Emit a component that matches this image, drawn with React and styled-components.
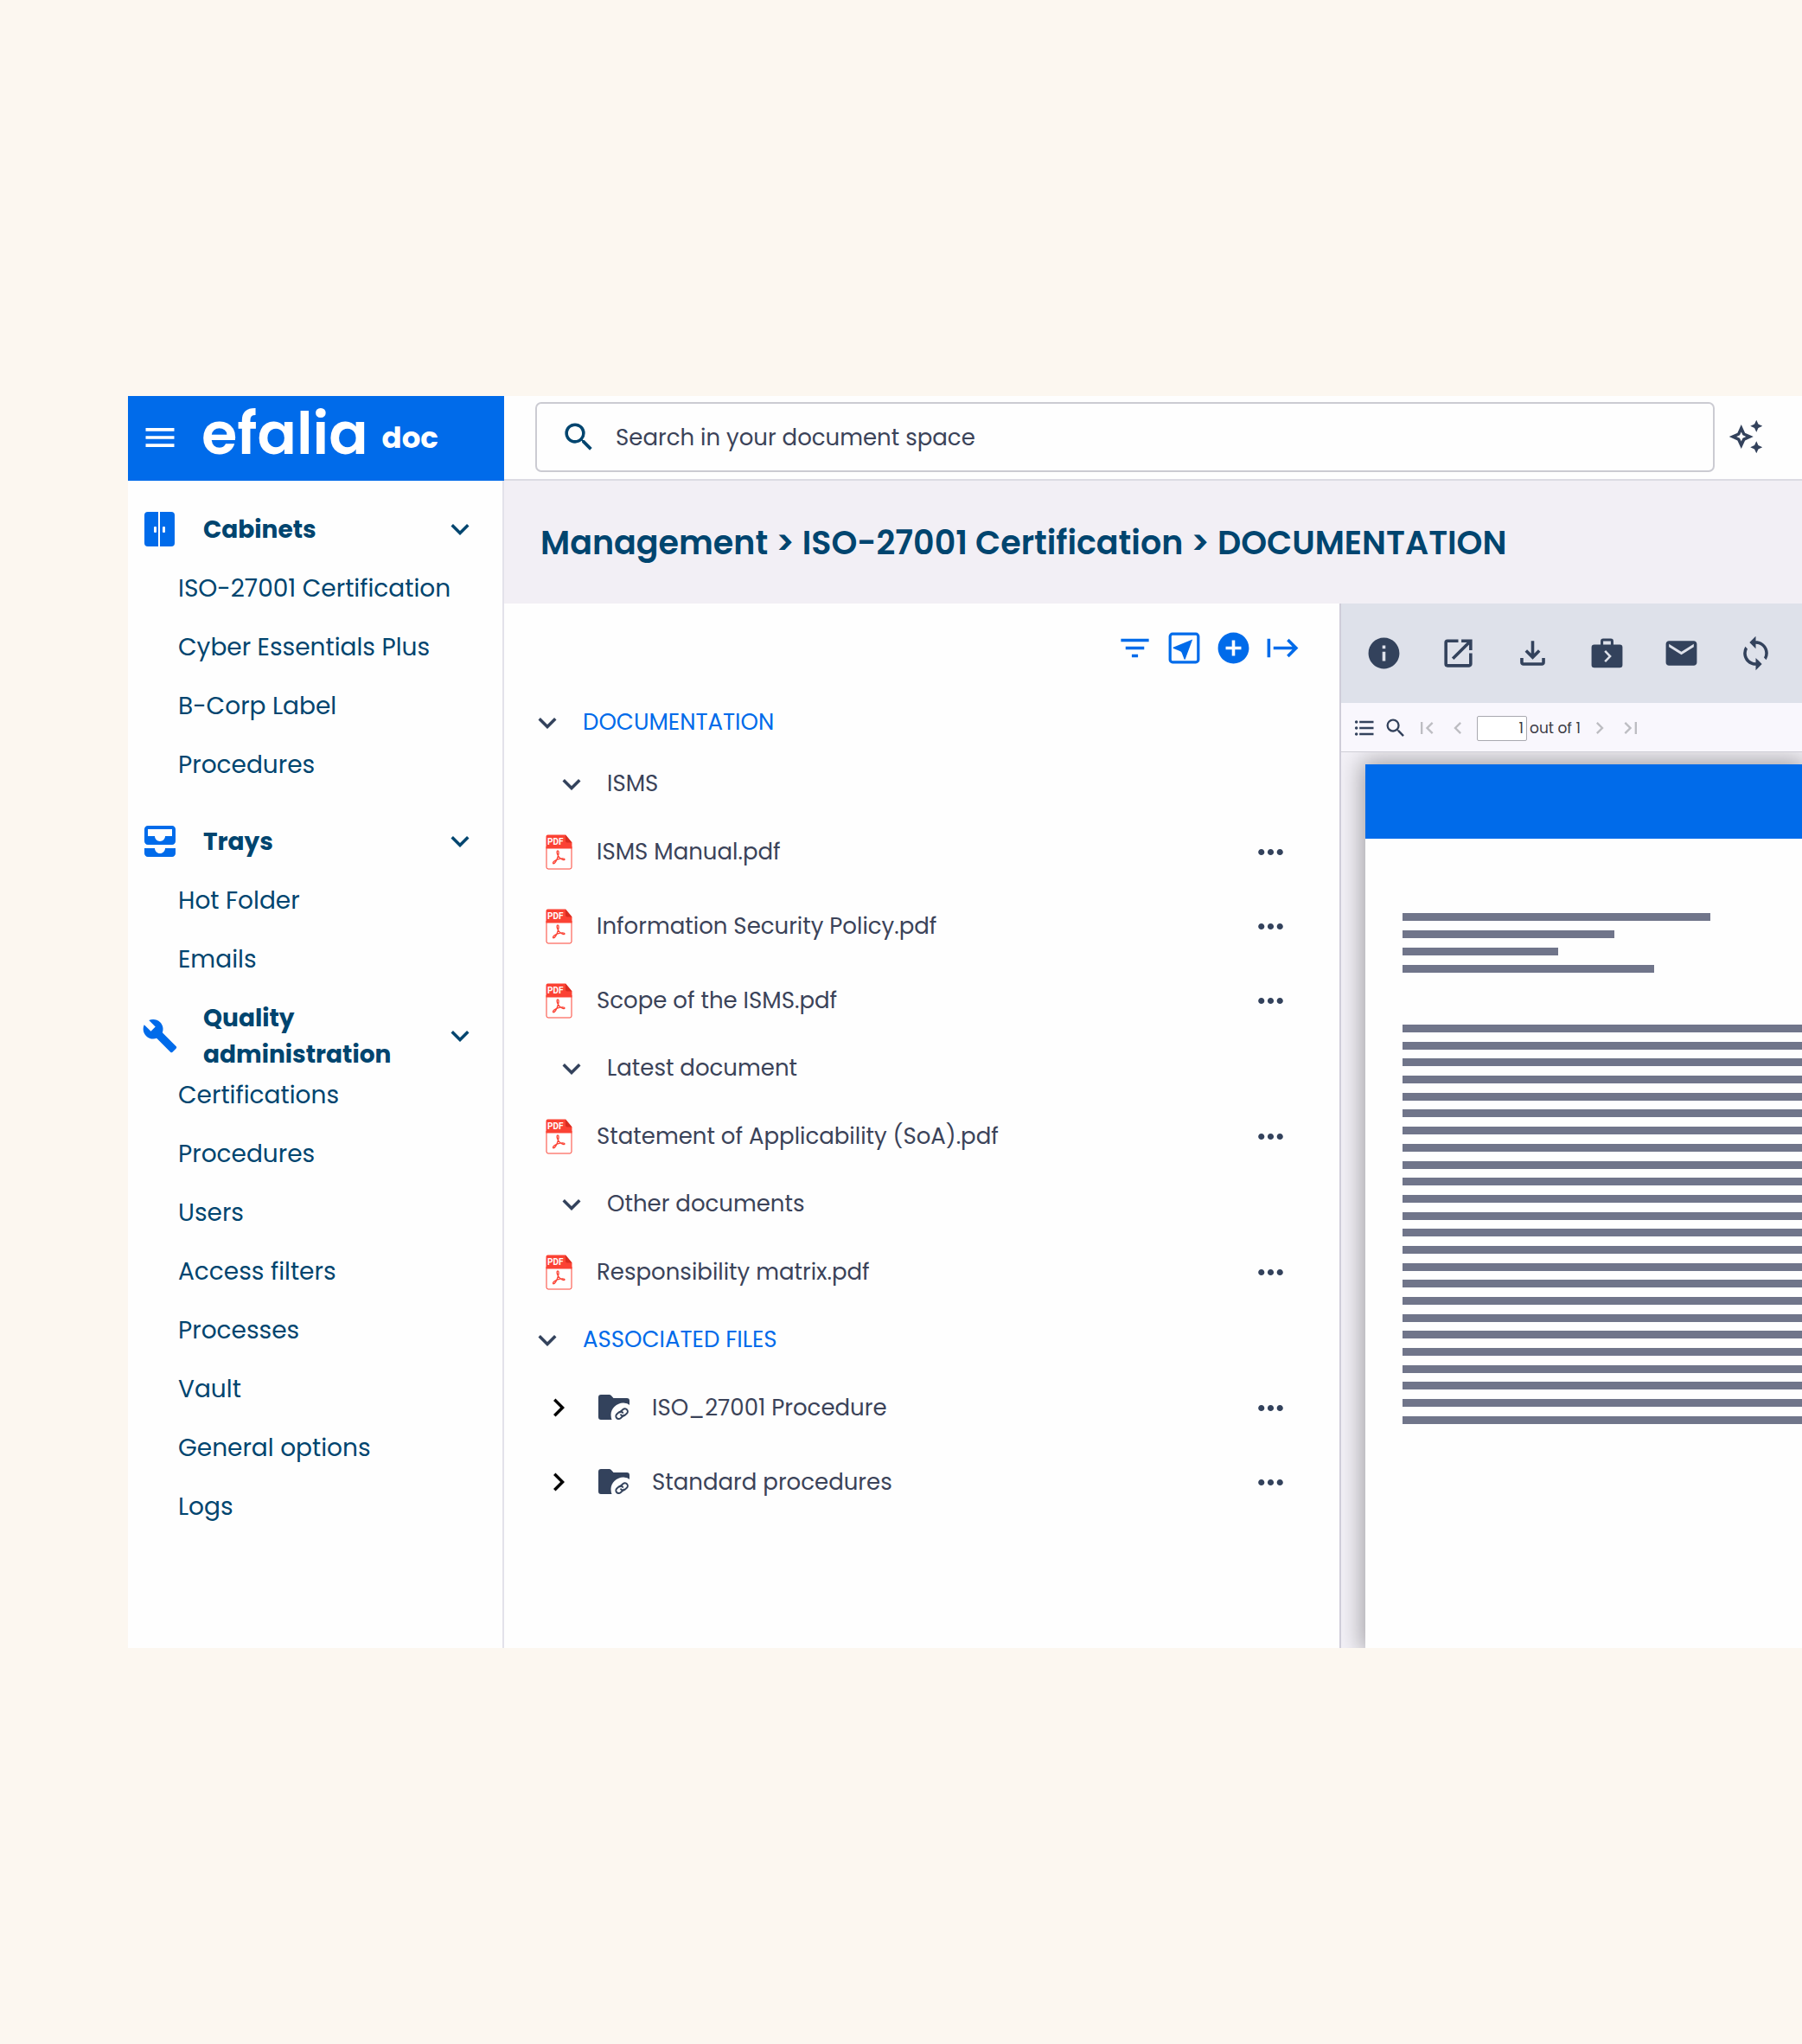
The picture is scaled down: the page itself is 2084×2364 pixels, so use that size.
import React from 'react';
import styled, { createGlobalStyle } from 'styled-components';
import {
    MdMenu, MdSearch, MdOutlineAutoAwesome, MdAllInbox, MdBuild, MdExpandMore,
    MdFilterList, MdAddCircle, MdStart, MdMoreHoriz, MdChevronRight, MdChevronLeft,
    MdInfo, MdOpenInNew, MdOutlineFileDownload, MdEmail, MdSync,
    MdFormatListBulleted, MdFirstPage, MdLastPage
} from 'react-icons/md';

const sections = [
    {
        title: 'Cabinets',
        icon: 'cabinet',
        items: ['ISO-27001 Certification', 'Cyber Essentials Plus', 'B-Corp Label', 'Procedures']
    },
    {
        title: 'Trays',
        icon: 'trays',
        items: ['Hot Folder', 'Emails']
    },
    {
        title: 'Quality administration',
        icon: 'quality',
        items: ['Certifications', 'Procedures', 'Users', 'Access filters', 'Processes', 'Vault', 'General options', 'Logs']
    }
];

const rows = [
    { type: 'root', label: 'DOCUMENTATION' },
    { type: 'group', label: 'ISMS' },
    { type: 'file', label: 'ISMS Manual.pdf' },
    { type: 'file', label: 'Information Security Policy.pdf' },
    { type: 'file', label: 'Scope of the ISMS.pdf' },
    { type: 'group', label: 'Latest document' },
    { type: 'file', label: 'Statement of Applicability (SoA).pdf' },
    { type: 'group', label: 'Other documents' },
    { type: 'file', label: 'Responsibility matrix.pdf' },
    { type: 'root', label: 'ASSOCIATED FILES' },
    { type: 'folder', label: 'ISO_27001 Procedure' },
    { type: 'folder', label: 'Standard procedures' }
];

const introLines = [356, 245, 180, 291];

function CabinetIcon() {
    return (
        <svg width="36" height="40" viewBox="0 0 36 40" fill="#006bea">
            <path d="M4 0h12v40H4a4 4 0 0 1-4-4V4a4 4 0 0 1 4-4z" />
            <path d="M18 0h13a4 4 0 0 1 4 4v32a4 4 0 0 1-4 4H18z" />
            <rect x="11" y="17" width="3" height="7" rx="1" fill="#fff" />
            <rect x="21" y="17" width="3" height="7" rx="1" fill="#fff" />
        </svg>
    );
}

function SendBoxIcon() {
    return (
        <svg width="43" height="43" viewBox="0 0 24 24" fill="currentColor">
            <rect x="2.9" y="2.9" width="18.2" height="18.2" rx="1.6" fill="none" stroke="currentColor" strokeWidth="1.8" />
            <path d="M17.4 6.4 4.8 11.6v.5l4.4 1.9c.7.3 1 .6 1.3 1.2l1.6 4.2h.5z" />
        </svg>
    );
}

function BriefcaseIcon() {
    return (
        <svg width="43" height="43" viewBox="0 0 24 24" fill="none">
            <path d="M8.7 7V4.2c0-.5.4-.8.8-.8h5c.5 0 .8.3.8.8V7" stroke="#33425c" strokeWidth="1.7" />
            <rect x="2" y="6.4" width="20" height="15" rx="1.8" fill="#33425c" />
            <path d="m10.7 10.6 3.3 3.4-3.3 3.4" stroke="#dee1ea" strokeWidth="1.4" />
        </svg>
    );
}

function PdfIcon() {
    return (
        <svg width="31" height="41" viewBox="0 0 31 41">
            <path d="M1 14v24a2 2 0 0 0 2 2h25a2 2 0 0 0 2-2V14" fill="#fff" stroke="#fb4234" strokeWidth="1" />
            <path d="M2.500 0.500H23L30.500 9.500V16.500H.5V2.500a2 2 0 0 1 2-2z" fill="#fb4234" />
            <path d="M23 .5 30.500 9.500H25a2 2 0 0 1-2-2z" fill="#d92d20" />
            <text x="2" y="12" fill="#fff" fontFamily="Roboto, sans-serif" fontSize="10" fontWeight="700">PDF</text>
            <path
                d="M14.600 25C12.800 22 12.600 19 14 18.800c1.600.2 1.200 3.600.4 6.200-1.200 4-3.600 8.800-5.400 8.800-1.600-.8 1-3.800 5-5 4-1.200 8-1.200 8 .3-.5 1.700-5-.5-7.400-4.100z"
                fill="none" stroke="#fb4234" strokeWidth="1.300"
            />
        </svg>
    );
}

function LinkedFolderIcon() {
    return (
        <svg width="37" height="30" viewBox="0 0 37 30">
            <path d="M3 0h9.500c1 0 1.700.3 2.300 1l2.700 3H33a3 3 0 0 1 3 3v19a3 3 0 0 1-3 3H3a3 3 0 0 1-3-3V3a3 3 0 0 1 3-3z" fill="#33425c" />
            <path d="M37 12.500A14 14 0 0 0 29 9.500C21 9.500 14.500 16 14.500 23c0 3 .5 5 1.500 7h21z" fill="#fefefe" />
            <g transform="translate(27 22) rotate(-42)" fill="none" stroke="#33425c" strokeWidth="1.900">
                <path d="M1.500 3H-4.500a3.200 3.200 0 0 1 0-6.400H-1.500a3.200 3.200 0 0 1 3 4.200" />
                <path d="M-1.500-2.600H4.500a3.200 3.200 0 0 1 0 6.400H1.500a3.200 3.200 0 0 1-3-4.200" />
            </g>
        </svg>
    );
}

function SectionIcon({ name }) {
    if (name === 'cabinet') return <CabinetIcon />;
    if (name === 'trays') return <MdAllInbox size={48} />;
    return <MdBuild size={42} />;
}

function Sidebar() {
    return (
        <SideNav aria-label="Main">
            {sections.map((section) => (
                <Section key={section.title}>
                    <SectionHeader type="button" aria-expanded="true">
                        <IconSlot><SectionIcon name={section.icon} /></IconSlot>
                        <SectionTitle>{section.title}</SectionTitle>
                        <MdExpandMore size={42} />
                    </SectionHeader>
                    {section.items.map((item) => (
                        <SideLink key={item} href="#">{item}</SideLink>
                    ))}
                </Section>
            ))}
        </SideNav>
    );
}

function Row({ type, label }) {
    if (type === 'root' || type === 'group') {
        return (
            <GroupRow type="button" aria-expanded="true" $root={type === 'root'}>
                <MdExpandMore size={42} />
                <span>{label}</span>
            </GroupRow>
        );
    }
    return (
        <FileRow $folder={type === 'folder'}>
            {type === 'folder' ? (
                <>
                    <PlainButton type="button" aria-label={`Expand ${label}`} $color="#000">
                        <MdChevronRight size={42} />
                    </PlainButton>
                    <LinkedFolderIcon />
                </>
            ) : <PdfIcon />}
            <FileLink href="#">{label}</FileLink>
            <PlainButton type="button" aria-label={`Actions for ${label}`}>
                <MdMoreHoriz size={43} />
            </PlainButton>
        </FileRow>
    );
}

function Preview() {
    return (
        <PreviewPane>
            <PreviewToolbar>
                <PlainButton type="button" aria-label="Information"><MdInfo size={43} /></PlainButton>
                <PlainButton type="button" aria-label="Open in new window"><MdOpenInNew size={43} /></PlainButton>
                <PlainButton type="button" aria-label="Download"><MdOutlineFileDownload size={43} /></PlainButton>
                <PlainButton type="button" aria-label="Send to case"><BriefcaseIcon /></PlainButton>
                <PlainButton type="button" aria-label="Send by email"><MdEmail size={43} /></PlainButton>
                <PlainButton type="button" aria-label="Refresh"><MdSync size={43} /></PlainButton>
            </PreviewToolbar>
            <Pager>
                <PlainButton type="button" aria-label="Outline"><MdFormatListBulleted size={28} /></PlainButton>
                <PlainButton type="button" aria-label="Find"><MdSearch size={28} /></PlainButton>
                <PlainButton type="button" aria-label="First page" $color="#bdbdc2"><MdFirstPage size={28} /></PlainButton>
                <PlainButton type="button" aria-label="Previous page" $color="#bdbdc2"><MdChevronLeft size={28} /></PlainButton>
                <PageLabel>
                    <PageInput aria-label="Page" defaultValue="1" />
                    out of 1
                </PageLabel>
                <PlainButton type="button" aria-label="Next page" $color="#bdbdc2"><MdChevronRight size={28} /></PlainButton>
                <PlainButton type="button" aria-label="Last page" $color="#bdbdc2"><MdLastPage size={28} /></PlainButton>
            </Pager>
            <Viewer>
                <Paper>
                    <PaperBanner />
                    <Paragraph $height={69}>
                        {introLines.map((width) => <TextLine key={width} style={{ width }} />)}
                    </Paragraph>
                    <Paragraph $height={462}>
                        {Array(24).fill().map((_, i) => <TextLine key={i} />)}
                    </Paragraph>
                </Paper>
            </Viewer>
        </PreviewPane>
    );
}

function App() {
    return (
        <Page>
            <GlobalStyle />
            <Window>
                <Brand>
                    <PlainButton type="button" aria-label="Menu" $color="#fff"><MdMenu size={44} /></PlainButton>
                    <Logo>efalia</Logo>
                    <Product>doc</Product>
                </Brand>
                <TopBar>
                    <SearchBox>
                        <MdSearch size={43} />
                        <SearchInput type="search" aria-label="Search" placeholder="Search in your document space" />
                    </SearchBox>
                    <PlainButton type="button" aria-label="Assistant"><MdOutlineAutoAwesome size={42} /></PlainButton>
                </TopBar>
                <Sidebar />
                <Main>
                    <Breadcrumb aria-label="Breadcrumb">
                        <a href="#">Management</a> &gt; <a href="#">ISO-27001 Certification</a> &gt; <a href="#">DOCUMENTATION</a>
                    </Breadcrumb>
                    <Columns>
                        <ListPane>
                            <ListToolbar>
                                <PlainButton type="button" aria-label="Filter" $color="#006bea"><MdFilterList size={43} /></PlainButton>
                                <PlainButton type="button" aria-label="Send" $color="#006bea"><SendBoxIcon /></PlainButton>
                                <PlainButton type="button" aria-label="Add" $color="#006bea"><MdAddCircle size={43} /></PlainButton>
                                <PlainButton type="button" aria-label="Collapse panel" $color="#006bea"><MdStart size={43} /></PlainButton>
                            </ListToolbar>
                            {rows.map((row) => <Row key={row.label} {...row} />)}
                        </ListPane>
                        <Preview />
                    </Columns>
                </Main>
            </Window>
        </Page>
    );
}

export default App

const GlobalStyle = createGlobalStyle`
* {
    box-sizing: border-box;
}
body {
    margin: 0;
    background-color: #fcf7f0;
    font-family: Poppins, Inter, "Liberation Sans", sans-serif;
}
a {
    color: inherit;
    text-decoration: none;
}
button, input {
    font-family: inherit;
}
svg {
    flex-shrink: 0;
    display: block;
}
`
const Page = styled.div`
min-height: 100vh;
padding-left: 148px;
display: flex;
align-items: center;
overflow: hidden;
`
const Window = styled.div`
flex: 1;
min-width: 0;
min-height: 1448px;
display: grid;
grid-template-columns: 435px minmax(0, 1fr);
grid-template-rows: 98px 1fr;
background-color: #fefefe;
`
const PlainButton = styled.button`
display: flex;
padding: 0;
border: none;
background: none;
color: ${(props) => props.$color || '#33425c'};
cursor: pointer;
`
const Brand = styled.div`
display: flex;
align-items: center;
padding: 0 0 2px 15px;
background-color: #006bea;
color: #fff;
`
const Logo = styled.span`
margin-left: 26px;
padding-bottom: 8px;
font-size: 67px;
line-height: 84px;
font-weight: 600;
`
const Product = styled.span`
margin-left: 16px;
font-size: 34px;
font-weight: 700;
`
const TopBar = styled.header`
display: flex;
align-items: center;
gap: 15px;
padding: 0 44px 2px 36px;
border-bottom: 2px solid #dcdbe3;
`
const SearchBox = styled.label`
flex: 1;
height: 81px;
display: flex;
align-items: center;
gap: 21px;
padding: 0 27px;
border: 2px solid #cbcbd2;
border-radius: 7px;
color: #00456f;
`
const SearchInput = styled.input`
flex: 1;
min-width: 0;
padding: 2px 0 0;
border: none;
outline: none;
background: none;
font-size: 26px;
color: #3b4359;
&::placeholder {
    color: #3b4359;
    opacity: 1;
}
`
const SideNav = styled.nav`
display: flex;
flex-direction: column;
gap: 21px;
padding-top: 22px;
border-right: 2px solid #e3e2ea;
color: #00456f;
`
const Section = styled.div`
display: flex;
flex-direction: column;
`
const SectionHeader = styled.button`
height: 68px;
display: flex;
align-items: center;
padding: 0 28px 0 13px;
border: none;
background: none;
color: inherit;
text-align: left;
cursor: pointer;
`
const IconSlot = styled.span`
width: 48px;
display: flex;
justify-content: center;
color: #006bea;
`
const SectionTitle = styled.span`
flex: 1;
margin-left: 26px;
padding-top: 2px;
font-size: 28px;
line-height: 42px;
font-weight: 700;
`
const SideLink = styled.a`
height: 68px;
padding-left: 58px;
font-size: 28px;
line-height: 70px;
`
const Main = styled.main`
min-width: 0;
display: flex;
flex-direction: column;
`
const Breadcrumb = styled.nav`
height: 142px;
padding-left: 42px;
background-color: #f2eff5;
color: #00456f;
font-size: 38px;
line-height: 144px;
font-weight: 600;
white-space: nowrap;
`
const Columns = styled.div`
flex: 1;
display: grid;
grid-template-columns: minmax(0, 966px) minmax(0, 1fr);
`
const ListPane = styled.section`
display: flex;
flex-direction: column;
`
const ListToolbar = styled.div`
height: 102px;
display: flex;
align-items: center;
justify-content: flex-end;
gap: 14px;
padding-right: 44px;
`
const GroupRow = styled.button`
height: 71px;
display: flex;
align-items: center;
gap: 20px;
padding: 0 0 0 ${(props) => props.$root ? '29px' : '57px'};
border: none;
background: none;
color: #33425c;
font-size: 26px;
cursor: pointer;
span {
    color: ${(props) => props.$root ? '#006bea' : '#3b4359'};
}
`
const FileRow = styled.div`
height: 86px;
display: flex;
align-items: center;
gap: ${(props) => props.$folder ? '25px' : '28px'};
padding: 0 58px 0 ${(props) => props.$folder ? '42px' : '48px'};
`
const FileLink = styled.a`
flex: 1;
color: #3b4359;
font-size: 26px;
`
const PreviewPane = styled.section`
min-width: 0;
display: flex;
flex-direction: column;
border-left: 2px solid #cfcdd9;
`
const PreviewToolbar = styled.div`
height: 115px;
display: flex;
align-items: center;
gap: 43px;
padding-left: 28px;
background-color: #dee1ea;
`
const Pager = styled.div`
height: 57px;
display: flex;
align-items: center;
gap: 8px;
padding: 2px 0 0 13px;
background-color: #f9f7fd;
border-bottom: 1px solid #cfced6;
`
const PageLabel = styled.label`
display: flex;
align-items: center;
gap: 3px;
color: #3b3b45;
font-size: 17px;
`
const PageInput = styled.input`
width: 58px;
height: 29px;
padding: 0 3px;
border: 1px solid #a9a9b0;
border-radius: 2px;
background-color: #fff;
color: #3b3b45;
font-size: 17px;
text-align: right;
`
const Viewer = styled.div`
flex: 1;
display: flex;
padding: 14px 0 0 28px;
background-color: #f3f1f7;
overflow: hidden;
`
const Paper = styled.div`
flex: 1;
background-color: #fefefe;
box-shadow: 0 0 26px 4px rgba(0, 0, 0, 0.34);
`
const PaperBanner = styled.div`
height: 86px;
background-color: #006bea;
`
const Paragraph = styled.div`
height: ${(props) => props.$height}px;
display: flex;
flex-direction: column;
justify-content: space-between;
padding-left: 43px;
margin-top: 86px;
& + & {
    margin-top: 60px;
}
`
const TextLine = styled.div`
height: 9px;
background-color: #70758a;
`
